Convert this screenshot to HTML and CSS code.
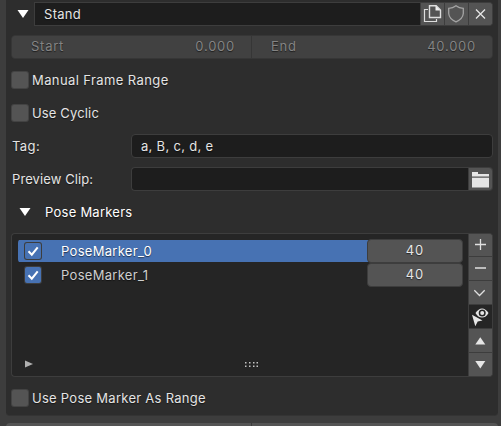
FILE: index.html
```html
<!DOCTYPE html>
<html lang="en">
<head>
<meta charset="utf-8">
<title>Stand</title>
<link rel="stylesheet" href="styles.css">
</head>
<body>
<main class="panel">
  <div class="row">
    <svg class="fold" width="24" height="24"><path d="M6.5 8h11L12 16z" fill="#fff"/></svg>
    <div class="field name">Stand</div>
    <div class="tools">
      <button class="btn"><svg width="24" height="24" fill="none" stroke="#dedede"><path d="M7 7.5H3.5v12h12V17" stroke-width="1.2"/><path d="M8.5 3.8h6.7l4.3 4.2v7.5h-11z" stroke-width="1.4"/><path d="M14.5 3.5v5h5z" fill="#eee" stroke="none"/></svg></button>
      <button class="btn"><svg width="24" height="24" fill="none" stroke="#a4a4a4" stroke-width="1.3"><path d="M11 3.7Q8 6.1 3.700 6.400v5.100q.500 5.500 7.300 8.300 6.800-2.800 7.300-8.300V6.400Q14 6.100 11 3.700z"/></svg></button>
      <button class="btn"><svg width="24" height="24" fill="none" stroke="#e6e6e6" stroke-width="1.3"><path d="M7 7.500l9 9M16 7.500l-9 9"/></svg></button>
    </div>
  </div>
  <div class="row range">
    <div class="num start"><span>Start</span><span>0.000</span></div>
    <div class="num"><span>End</span><span>40.000</span></div>
  </div>
  <div class="row"><i class="check"></i><span class="caption manual">Manual Frame Range</span></div>
  <div class="row"><i class="check"></i><span class="caption cyclic">Use Cyclic</span></div>
  <div class="row"><span class="label">Tag:</span><div class="field tag">a, B, c, d, e</div></div>
  <div class="row"><span class="label preview">Preview Clip:</span><div class="field clip"></div>
    <div class="tools"><button class="btn"><svg width="24" height="24" fill="#e6e6e6"><path d="M3 5h6v2h11v2.500H3zM3 10.800h17V20.500H3z"/></svg></button></div>
  </div>
  <div class="row sub"><svg width="24" height="24"><path d="M6.500 8h11L12 16z" fill="#fff"/></svg><span>Pose Markers</span></div>
  <div class="row list">
    <div class="items">
      <div class="item selected">
        <i class="check on"><svg width="16" height="16"><path d="M3.500 8.300l3.300 3.400L12.700 4.300" fill="none" stroke="#fff" stroke-width="2"/></svg></i>
        <span>PoseMarker_0</span><b>40</b>
      </div>
      <div class="item">
        <i class="check on"><svg width="16" height="16"><path d="M3.500 8.300l3.300 3.400L12.700 4.300" fill="none" stroke="#fff" stroke-width="2"/></svg></i>
        <span>PoseMarker_1</span><b>40</b>
      </div>
      <div class="foot">
        <svg width="8" height="8"><path d="M0 .5L8 4 0 7.500z" fill="#b0b0b0"/></svg>
        <svg class="grip" width="13" height="5" fill="#c4c4c4"><path d="M0 0h1.500v1.500H0zM4 0h1.500v1.500H4zM8 0h1.500v1.500H8zM11.500 0H13v1.500h-1.500zM0 3.500h1.500V5H0zM4 3.500h1.500V5H4zM8 3.500h1.500V5H8zM11.500 3.500H13V5h-1.500z"/></svg>
      </div>
    </div>
    <div class="tools stack">
      <button class="btn"><svg width="23" height="23" stroke="#e0e0e0" stroke-width="1.300"><path d="M6 10.500h11M11.500 5v11"/></svg></button>
      <button class="btn"><svg width="23" height="23" stroke="#e0e0e0" stroke-width="1.300"><path d="M6 11h11"/></svg></button>
      <button class="btn"><svg width="23" height="23" fill="none" stroke="#e0e0e0" stroke-width="1.300"><path d="M5.300 9.300l5.200 5.200 5.200-5.200"/></svg></button>
      <button class="btn dark"><svg width="23" height="23"><path d="M6.500 8q3-4.500 6.500-4.500T19.500 8Q17 12.500 13 12.500T6.500 8z" fill="#e6e6e6"/><circle cx="13.200" cy="8" r="3.500" fill="#252525"/><circle cx="13.200" cy="8" r="2" fill="#e6e6e6"/><path d="M3 9.800l10.500 5.600-4.800 1.200-2.400 4.600z" fill="#e6e6e6"/></svg></button>
      <button class="btn"><svg width="23" height="23"><path d="M6.300 15.500h10L11.300 8.300z" fill="#e6e6e6"/></svg></button>
      <button class="btn"><svg width="23" height="23"><path d="M6.300 8h10l-5 7.500z" fill="#e6e6e6"/></svg></button>
    </div>
  </div>
  <div class="row"><i class="check"></i><span class="caption use">Use Pose Marker As Range</span></div>
</main>
<footer class="next"><i></i><i></i></footer>
</body>
</html>
```
FILE: styles.css
```css
* { box-sizing: border-box; }
body {
  margin: 0;
  height: 426px;
  overflow: hidden;
  background: #3d3d3d;
  color: #e4e4e4;
  font: 13px/24px Inter, "Liberation Sans", sans-serif;
  letter-spacing: .4px;
  text-shadow: 0 1px 1px rgba(0, 0, 0, .55);
}
svg { display: block; flex: none; }
.panel {
  display: flex;
  flex-direction: column;
  gap: 9px;
  height: 416px;
  margin: 0 3px 0 6px;
  padding: 2px 5px 0;
  background: #2d2d2d;
  border-bottom: 1px solid #343434;
  border-radius: 0 0 4px 4px;
}
.row { display: flex; align-items: center; height: 24px; flex: none; }
.field {
  flex: 1;
  height: 24px;
  padding-left: 9px;
  line-height: 22px;
  background: #1d1d1d;
  border: 1px solid #3d3d3d;
  border-radius: 4px;
  white-space: nowrap;
}
.name { margin-left: -1px; border-radius: 0; border-right: 0; }
.name, .tag { letter-spacing: .3px; }
.clip { border-radius: 4px 0 0 4px; border-right: 0; }
.tools {
  display: flex;
  height: 24px;
  background: #545454;
  border: 1px solid #3d3d3d;
  border-left: 0;
  border-radius: 0 4px 4px 0;
  overflow: hidden;
}
.btn {
  display: flex;
  width: 24px;
  height: 24px;
  margin-top: -1px;
  padding: 0;
  border: 0;
  border-left: 1px solid #3d3d3d;
  background: #545454;
}
.range { gap: 1px; background: #363636; border-radius: 4px; overflow: hidden; border: 1px solid #363636; }
.num {
  display: flex;
  justify-content: space-between;
  flex: 1;
  height: 22px;
  padding: 0 16px 0 19px;
  background: #414141;
  color: #848484;
  line-height: 21px;
  letter-spacing: .75px;
}
.start { flex: 0 0 239px; }
.check {
  width: 16px;
  height: 16px;
  margin-left: 1px;
  background: #545454;
  border-radius: 2px;
  box-shadow: 0 0 0 1px #434343;
  flex: none;
}
.caption { margin-left: 4px; line-height: 22px; margin-bottom: 1px; }
.cyclic { letter-spacing: .15px; }
.use { letter-spacing: .27px; }
.label { width: 120px; margin-left: 1px; margin-right: -1px; flex: none; line-height: 22px; margin-bottom: 1px; }
.preview { letter-spacing: .1px; }
.sub { padding-left: 2px; color: #fff; }
.sub span { margin: 0 0 1px 8px; letter-spacing: .25px; }
.list { height: 144px; align-items: stretch; }
.items {
  display: flex;
  flex-direction: column;
  flex: 1;
  padding: 5px 5px 0 6px;
  background: #252525;
  border: 1px solid #3d3d3d;
  border-right: 0;
  border-radius: 4px 0 0 4px;
}
.item { display: flex; align-items: center; height: 24px; color: #cfcfcf; }
.selected {
  color: #fff;
  background: linear-gradient(#4772b3, #4772b3) 0 1px / 352px 22px no-repeat;
  border-radius: 4px;
}
.item .check { margin-left: 7px; background: #4772b3; box-shadow: 0 0 0 1px #3d3d3d; }
.item span { flex: 1; margin: 0 0 1px 20px; letter-spacing: .3px; }
.item b {
  width: 96px;
  height: 24px;
  font-weight: 400;
  line-height: 21px;
  text-align: center;
  letter-spacing: .9px;
  color: #e6e6e6;
  background: #545454;
  border: 1px solid #3d3d3d;
  border-radius: 4px;
}
.foot { display: flex; align-items: center; margin: auto 0 8px 7px; }
.grip { margin-left: 212px; }
.stack { display: block; height: 144px; width: 25px; }
.stack .btn { margin: 0; border-bottom: 1px solid #3d3d3d; }
.stack .btn:first-child { height: 23px; }
.stack .dark { background: #252525; }
.next { display: flex; gap: 1px; margin: 7px 3px 0 6px; height: 24px; }
.next i { flex: 1; background: #545454; border-radius: 4px 0 0 0; }
.next i:first-child { flex: 0 0 245px; }
.next i + i { border-radius: 0 4px 0 0; }
```
